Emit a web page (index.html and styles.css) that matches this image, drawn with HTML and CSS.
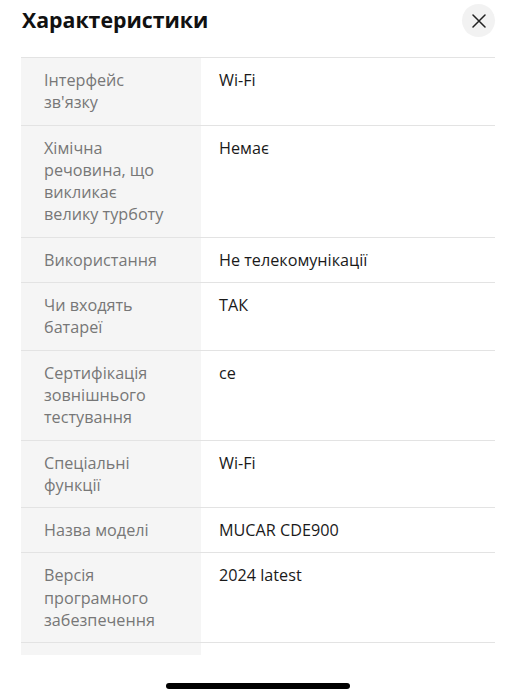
FILE: index.html
```html
<!DOCTYPE html>
<html lang="uk">
<head>
<meta charset="utf-8">
<link rel="stylesheet" href="styles.css">
</head>
<body>
<div class="sheet">
  <header class="head">
    <h1 class="title">Характеристики</h1>
    <button class="close" aria-label="Закрити">
      <svg width="14" height="14" viewBox="0 0 14 14"><path d="M1 1L13 13M13 1L1 13" stroke="#222" stroke-width="1.5" stroke-linecap="round"/></svg>
    </button>
  </header>
  <div class="scroll">
    <div class="specs">
      <div class="row"><div class="k">Інтерфейс зв'язку</div><div class="v">Wi-Fi</div></div>
      <div class="row"><div class="k">Хімічна речовина, що викликає велику турботу</div><div class="v">Немає</div></div>
      <div class="row"><div class="k">Використання</div><div class="v">Не телекомунікації</div></div>
      <div class="row"><div class="k">Чи входять батареї</div><div class="v">ТАК</div></div>
      <div class="row"><div class="k">Сертифікація зовнішнього тестування</div><div class="v">ce</div></div>
      <div class="row"><div class="k">Спеціальні функції</div><div class="v">Wi-Fi</div></div>
      <div class="row"><div class="k">Назва моделі</div><div class="v">MUCAR CDE900</div></div>
      <div class="row"><div class="k">Версія програмного забезпечення</div><div class="v">2024 latest</div></div>
      <div class="row row-partial"><div class="k"></div><div class="v"></div></div>
    </div>
  </div>
  <div class="home"><span class="bar"></span></div>
</div>
</body>
</html>
```
FILE: styles.css
```css
* { box-sizing: border-box; }
html, body { margin: 0; padding: 0; background: #fff; }
body { font-family: "Open Sans", "Noto Sans", sans-serif; color: #222; }
.sheet { width: 516px; height: 700px; display: flex; flex-direction: column; overflow: hidden; }
.head { display: flex; justify-content: space-between; align-items: flex-start; padding: 4px 21px 0 22px; height: 57px; }
.title { margin: 0; font-size: 21.3px; font-weight: 700; line-height: 32px; color: #111; }
.close { width: 33px; height: 33px; border-radius: 50%; border: 0; background: #f2f2f2; display: flex; align-items: center; justify-content: center; padding: 0; }
.scroll { height: 598px; overflow: hidden; padding: 0 21px; }
.specs { border-top: 1px solid #e3e3e3; }
.row { display: grid; grid-template-columns: 180px 1fr; border-bottom: 1px solid #e3e3e3; font-size: 16.2px; line-height: 22.3px; }
.row-partial { height: 45px; }
.k { background: #f5f5f5; color: #777; padding: 11px 27px 11px 23px; }
.v { color: #1a1a1a; padding: 11px 12px 11px 18px; }
.home { flex: 1; display: flex; justify-content: center; align-items: flex-start; padding-top: 28px; }
.bar { width: 184px; height: 6px; border-radius: 3px; background: #000; }
```
